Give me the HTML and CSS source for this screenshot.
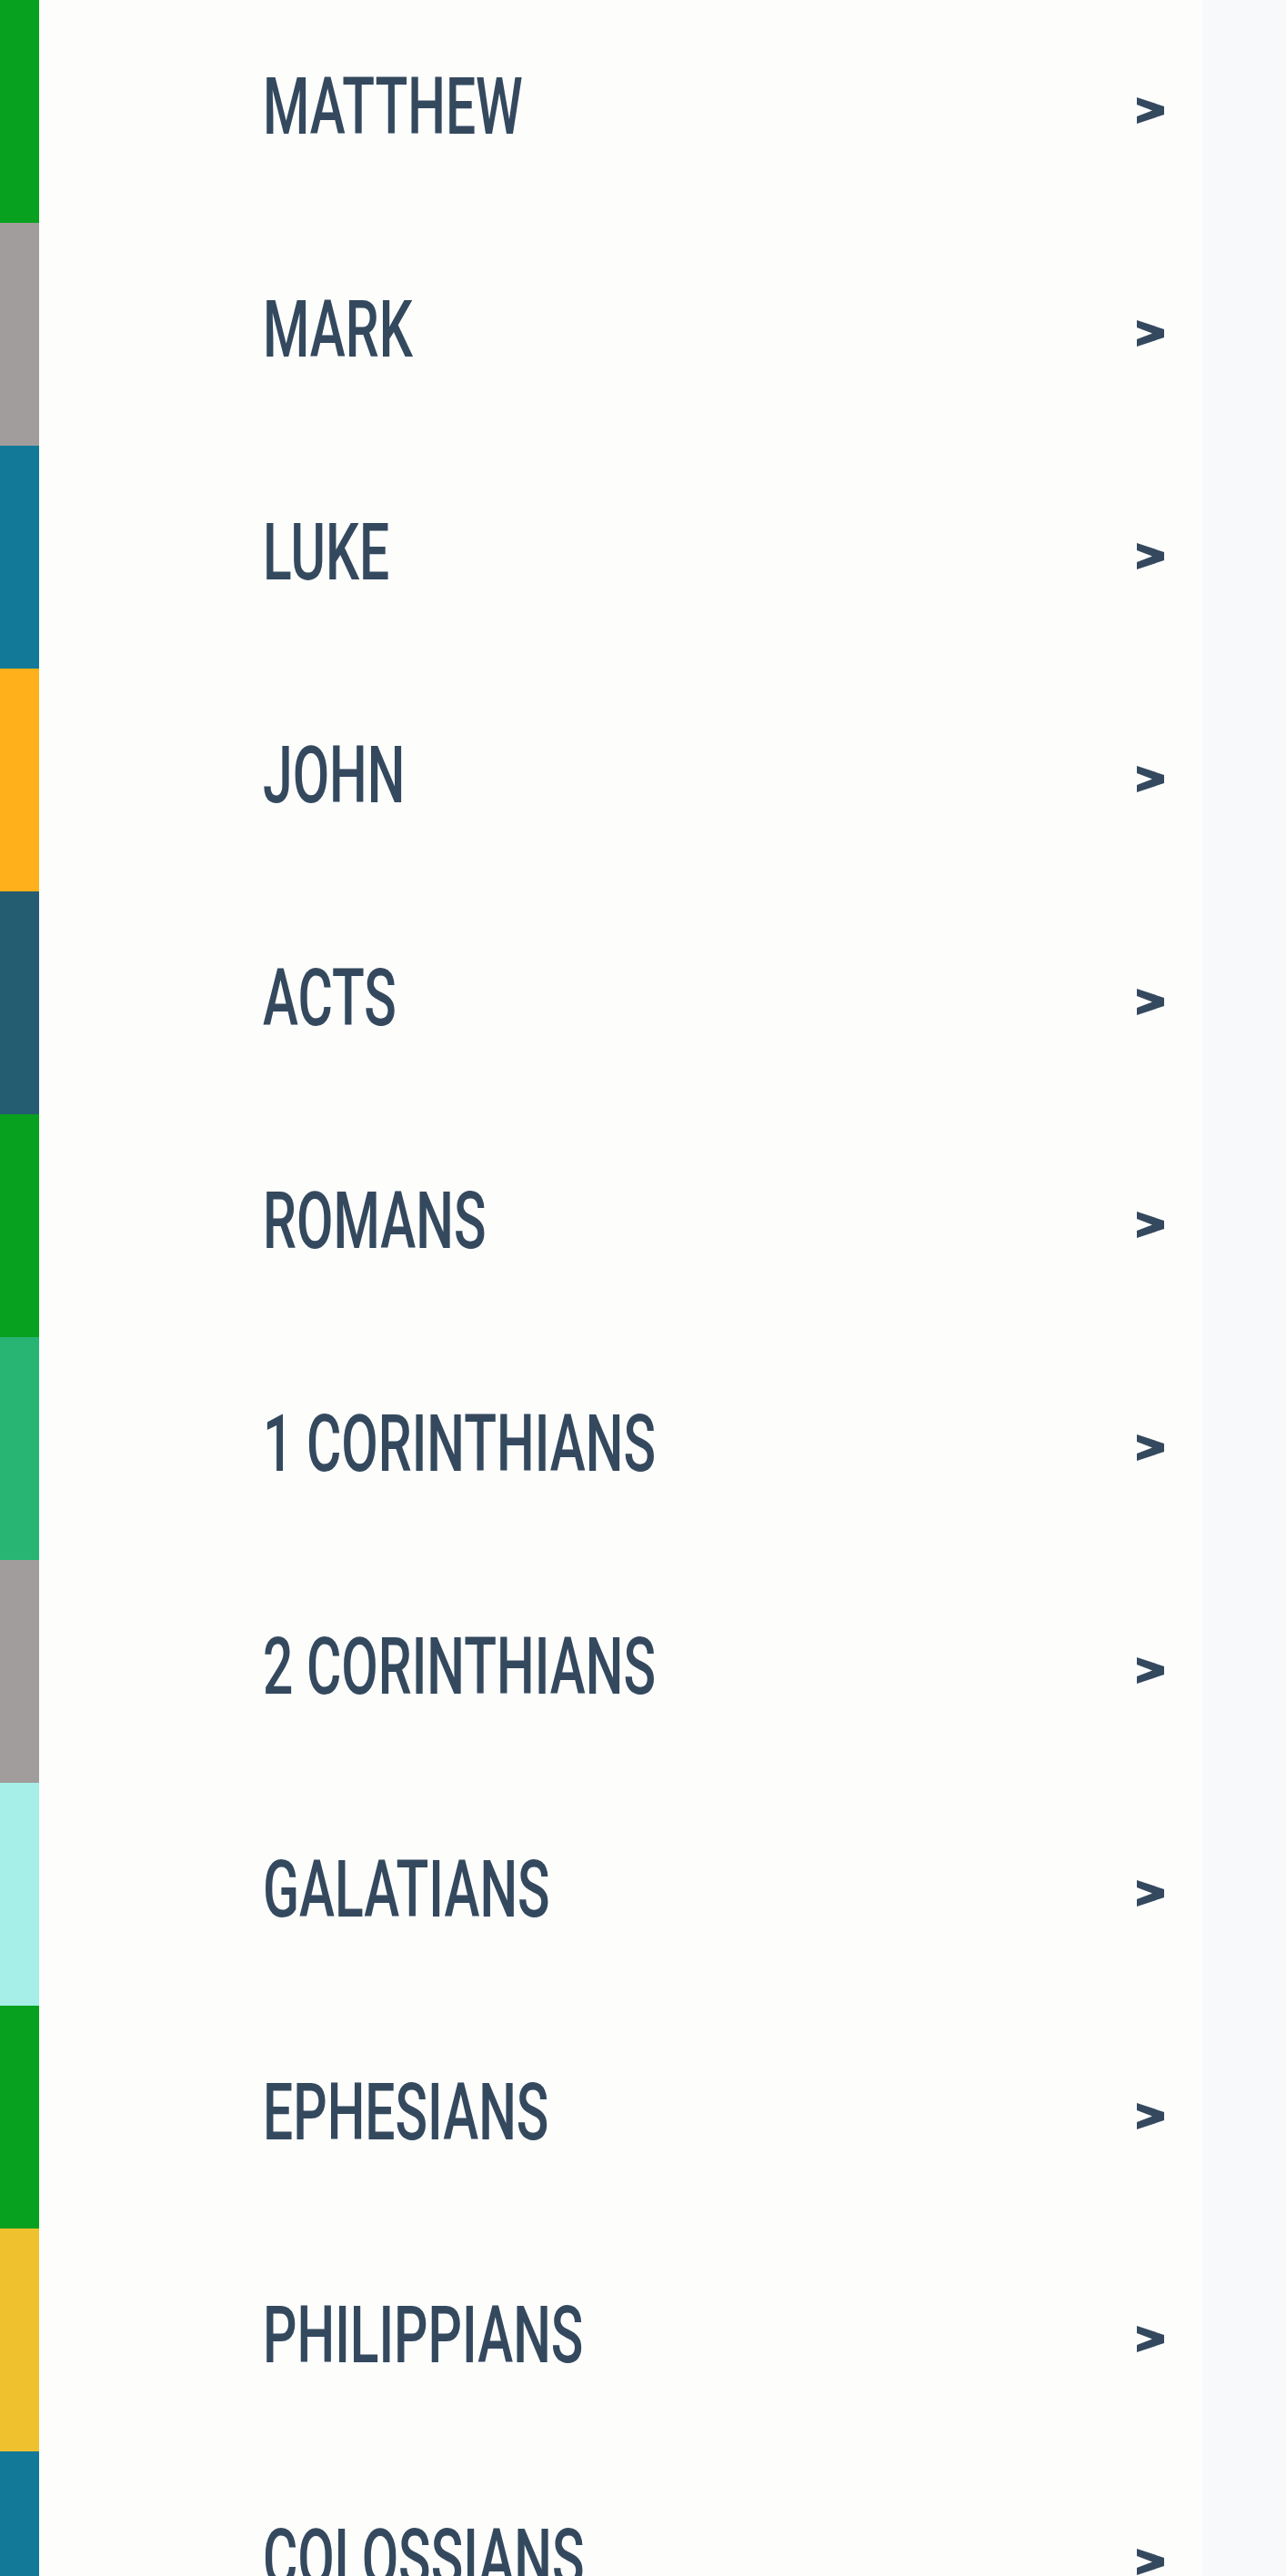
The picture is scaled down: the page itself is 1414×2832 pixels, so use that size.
FILE: index.html
```html
<!DOCTYPE html>
<html lang="en">
<head>
    <meta charset="UTF-8">
    <meta name="viewport" content="width=device-width, initial-scale=1.0">
    <title>New Testament Books</title>
    <link rel="stylesheet" href="styles.css">
</head>
<body>
    <ul class="book-list">
        <li class="book"><a class="book-link" href="#"><span class="book-color green"></span><span class="book-name">MATTHEW</span><svg class="book-arrow" viewBox="0 0 30 29"><polygon points="0,0 30,10 30,19 0,29 0,21 17,14.5 0,8"/></svg></a></li>
        <li class="book"><a class="book-link" href="#"><span class="book-color gray"></span><span class="book-name">MARK</span><svg class="book-arrow" viewBox="0 0 30 29"><polygon points="0,0 30,10 30,19 0,29 0,21 17,14.5 0,8"/></svg></a></li>
        <li class="book"><a class="book-link" href="#"><span class="book-color teal"></span><span class="book-name">LUKE</span><svg class="book-arrow" viewBox="0 0 30 29"><polygon points="0,0 30,10 30,19 0,29 0,21 17,14.5 0,8"/></svg></a></li>
        <li class="book"><a class="book-link" href="#"><span class="book-color amber"></span><span class="book-name">JOHN</span><svg class="book-arrow" viewBox="0 0 30 29"><polygon points="0,0 30,10 30,19 0,29 0,21 17,14.5 0,8"/></svg></a></li>
        <li class="book"><a class="book-link" href="#"><span class="book-color slate"></span><span class="book-name">ACTS</span><svg class="book-arrow" viewBox="0 0 30 29"><polygon points="0,0 30,10 30,19 0,29 0,21 17,14.5 0,8"/></svg></a></li>
        <li class="book"><a class="book-link" href="#"><span class="book-color green"></span><span class="book-name">ROMANS</span><svg class="book-arrow" viewBox="0 0 30 29"><polygon points="0,0 30,10 30,19 0,29 0,21 17,14.5 0,8"/></svg></a></li>
        <li class="book"><a class="book-link" href="#"><span class="book-color mint"></span><span class="book-name">1 CORINTHIANS</span><svg class="book-arrow" viewBox="0 0 30 29"><polygon points="0,0 30,10 30,19 0,29 0,21 17,14.5 0,8"/></svg></a></li>
        <li class="book"><a class="book-link" href="#"><span class="book-color gray"></span><span class="book-name">2 CORINTHIANS</span><svg class="book-arrow" viewBox="0 0 30 29"><polygon points="0,0 30,10 30,19 0,29 0,21 17,14.5 0,8"/></svg></a></li>
        <li class="book"><a class="book-link" href="#"><span class="book-color aqua"></span><span class="book-name">GALATIANS</span><svg class="book-arrow" viewBox="0 0 30 29"><polygon points="0,0 30,10 30,19 0,29 0,21 17,14.5 0,8"/></svg></a></li>
        <li class="book"><a class="book-link" href="#"><span class="book-color green"></span><span class="book-name">EPHESIANS</span><svg class="book-arrow" viewBox="0 0 30 29"><polygon points="0,0 30,10 30,19 0,29 0,21 17,14.5 0,8"/></svg></a></li>
        <li class="book"><a class="book-link" href="#"><span class="book-color yellow"></span><span class="book-name">PHILIPPIANS</span><svg class="book-arrow" viewBox="0 0 30 29"><polygon points="0,0 30,10 30,19 0,29 0,21 17,14.5 0,8"/></svg></a></li>
        <li class="book"><a class="book-link" href="#"><span class="book-color teal"></span><span class="book-name">COLOSSIANS</span><svg class="book-arrow" viewBox="0 0 30 29"><polygon points="0,0 30,10 30,19 0,29 0,21 17,14.5 0,8"/></svg></a></li>
    </ul>
</body>
</html>
```

FILE: styles.css
```css
body {
    margin: 0;
    padding: 0;
    background-color: #f8f9fa;
    font-family: Roboto, "Liberation Sans", sans-serif;
    color: #34495e;
}

.book-list {
    list-style: none;
    margin: 0;
    padding: 0;
    width: 1322px;
    background-color: #fdfdfc;
}

.book-link {
    display: flex;
    align-items: center;
    height: 245px;
    color: #34495e;
    text-decoration: none;
}

.book-color {
    align-self: stretch;
    width: 43px;
    flex-shrink: 0;
}

.book-name {
    flex: 1;
    margin-left: 246px;
    margin-bottom: 11px;
    font-size: 87px;
    font-weight: 500;
    line-height: 1;
    white-space: nowrap;
    transform: scaleX(0.675);
    transform-origin: left center;
}

.book-arrow {
    width: 30px;
    height: 29px;
    margin-right: 42px;
    margin-bottom: 2px;
    fill: #34495e;
    flex-shrink: 0;
}

.green { background-color: #08a11f; }
.gray { background-color: #a09d9c; }
.teal { background-color: #127a98; }
.amber { background-color: #ffb01a; }
.slate { background-color: #245d71; }
.mint { background-color: #28b573; }
.aqua { background-color: #a5efe8; }
.yellow { background-color: #efc12f; }
```
